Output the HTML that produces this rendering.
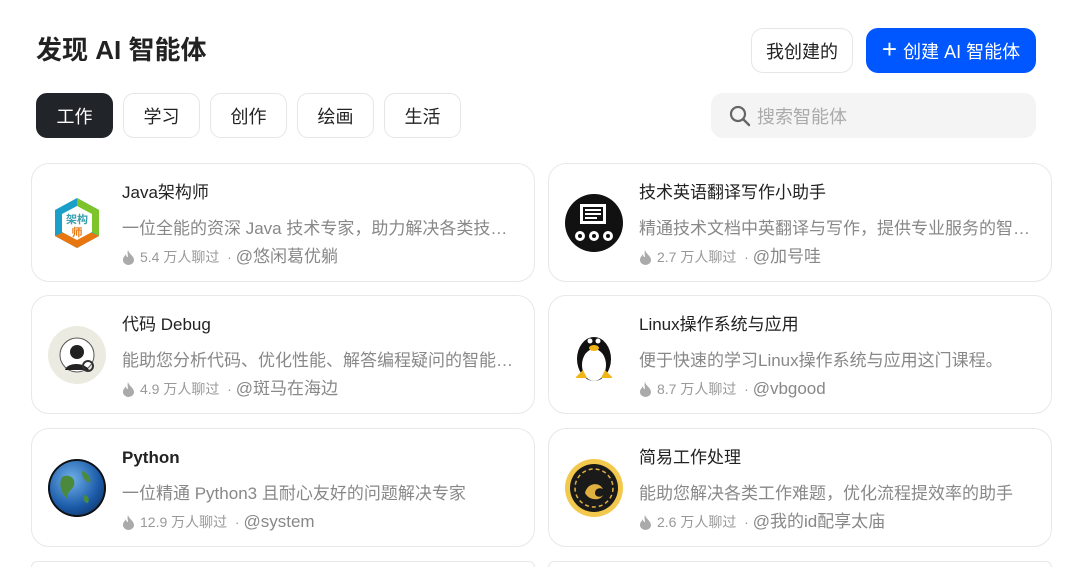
<!DOCTYPE html>
<html><head><meta charset="utf-8"><style>
*{box-sizing:border-box;margin:0;padding:0}
html,body{width:1077px;height:567px;overflow:hidden}
body{background:#fff;font-family:"Liberation Sans","Noto Sans CJK SC",sans-serif;color:#222;position:relative}
.abs{position:absolute}
h1{position:absolute;left:36px;top:33px;font-size:26px;font-weight:bold;color:#222;line-height:34px}
.btn{position:absolute;top:28px;height:45px;border-radius:12px;font-size:18px;display:flex;align-items:center;justify-content:center}
.tab{position:absolute;top:93px;width:77px;height:45px;border:1px solid #e6e6e6;border-radius:11px;font-size:18px;display:flex;align-items:center;justify-content:center;color:#222}
.card{position:absolute;width:504px;height:119px;border:1px solid #e8e8e8;border-radius:18px;overflow:hidden}
.av{position:absolute;left:16px;top:30px;width:58px;height:58px;border-radius:50%;overflow:hidden}
.t{position:absolute;left:90px;top:18px;height:22px;line-height:22px;font-size:17px;color:#222;white-space:nowrap}
.d{position:absolute;left:90px;top:54px;height:22px;line-height:22px;width:392px;font-size:17px;color:#888;white-space:nowrap;overflow:hidden;text-overflow:ellipsis}
.m{position:absolute;left:90px;top:82px;height:22px;line-height:22px;font-size:14px;color:#999;white-space:nowrap;display:flex;align-items:center}
.m .u{font-size:17px;color:#888}
.m svg{margin-right:5px}
</style></head><body>
<h1>发现 AI 智能体</h1>
<div class="btn" style="left:751px;width:102px;border:1px solid #e6e6e6;color:#222">我创建的</div>
<div class="btn" style="left:866px;width:170px;background:#0057ff;color:#fff"><span style="font-size:26px;margin-right:6px;margin-top:-3px">+</span>创建 AI 智能体</div>
<div class="tab" style="left:36px;background:#212428;color:#fff;border-color:#212428">工作</div>
<div class="tab" style="left:123px">学习</div>
<div class="tab" style="left:210px">创作</div>
<div class="tab" style="left:297px">绘画</div>
<div class="tab" style="left:384px">生活</div>
<div class="abs" style="left:711px;top:93px;width:325px;height:45px;background:#f4f4f4;border-radius:12px;display:flex;align-items:center;padding-left:18px;font-size:18px;color:#aaa">
<svg width="22" height="22" viewBox="0 0 22 22" style="margin-right:6px"><circle cx="9" cy="9" r="7" fill="none" stroke="#666" stroke-width="2.2"/><path d="M14 14l6 6" stroke="#666" stroke-width="2.4" stroke-linecap="round"/></svg>搜索智能体</div>

<div class="card" style="left:31px;top:163px">
<div class="av" style="background:#fff"><svg width="58" height="58" viewBox="0 0 58 58"><polygon points="29,4 51,16 51,42 29,54 7,42 7,16" fill="#1aa0c8"/><polygon points="29,4 51,16 51,42 29,30" fill="#7cc42a"/><polygon points="7,42 29,54 51,42 29,32" fill="#e8760e"/><polygon points="29,12 44,20 44,38 29,46 14,38 14,20" fill="#fff"/><text x="29" y="29" font-size="11" text-anchor="middle" fill="#3aa0b0" font-weight="bold" font-family="Noto Sans CJK SC">架构</text><text x="29" y="42" font-size="11" text-anchor="middle" fill="#e8760e" font-weight="bold" font-family="Noto Sans CJK SC">师</text></svg></div>
<div class="t">Java架构师</div><div class="d">一位全能的资深 Java 技术专家，助力解决各类技术难题</div>
<div class="m"><svg width="13" height="15" viewBox="0 0 13 15"><path d="M6 0C7 4 12 6 12 10a5.5 5 0 0 1-11 0C1 7 3 6 4 4c0 2 1 3 2 3C6 5 5 3 6 0z" fill="#aaa"/></svg>5.4 万人聊过 &nbsp;·&nbsp; <span class="u">@悠闲葛优躺</span></div></div>

<div class="card" style="left:548px;top:163px">
<div class="av" style="background:#111"><svg width="58" height="58" viewBox="0 0 58 58"><rect x="15" y="10" width="26" height="20" fill="#fff"/><rect x="18" y="13" width="20" height="14" fill="#111"/><path d="M20 16h16M20 20h16M20 24h12" stroke="#fff" stroke-width="2"/><circle cx="15" cy="42" r="5" fill="#fff"/><circle cx="29" cy="42" r="5" fill="#fff"/><circle cx="43" cy="42" r="5" fill="#fff"/><circle cx="15" cy="42" r="2" fill="#111"/><circle cx="29" cy="42" r="2" fill="#111"/><circle cx="43" cy="42" r="2" fill="#111"/></svg></div>
<div class="t">技术英语翻译写作小助手</div><div class="d">精通技术文档中英翻译与写作，提供专业服务的智能助手</div>
<div class="m"><svg width="13" height="15" viewBox="0 0 13 15"><path d="M6 0C7 4 12 6 12 10a5.5 5 0 0 1-11 0C1 7 3 6 4 4c0 2 1 3 2 3C6 5 5 3 6 0z" fill="#aaa"/></svg>2.7 万人聊过 &nbsp;·&nbsp; <span class="u">@加号哇</span></div></div>

<div class="card" style="left:31px;top:295px">
<div class="av" style="background:#ecebe2"><svg width="58" height="58" viewBox="0 0 58 58"><circle cx="29" cy="29" r="17" fill="#fff" stroke="#555" stroke-width="1"/><circle cx="29" cy="26" r="7" fill="#222"/><path d="M17 44c2-8 20-8 24 0z" fill="#222"/><circle cx="40" cy="40" r="5" fill="none" stroke="#333" stroke-width="2"/></svg></div>
<div class="t">代码 Debug</div><div class="d">能助您分析代码、优化性能、解答编程疑问的智能助手</div>
<div class="m"><svg width="13" height="15" viewBox="0 0 13 15"><path d="M6 0C7 4 12 6 12 10a5.5 5 0 0 1-11 0C1 7 3 6 4 4c0 2 1 3 2 3C6 5 5 3 6 0z" fill="#aaa"/></svg>4.9 万人聊过 &nbsp;·&nbsp; <span class="u">@斑马在海边</span></div></div>

<div class="card" style="left:548px;top:295px">
<div class="av" style="background:#fff"><svg width="58" height="58" viewBox="0 0 58 58"><ellipse cx="29" cy="33" rx="17" ry="22" fill="#111"/><ellipse cx="29" cy="39" rx="12" ry="16" fill="#fff"/><ellipse cx="29" cy="22" rx="5" ry="3" fill="#f2b518"/><path d="M10 52l8-8 4 8zM48 52l-8-8-4 8z" fill="#f2b518"/><circle cx="25" cy="15" r="2.5" fill="#fff"/><circle cx="33" cy="15" r="2.5" fill="#fff"/></svg></div>
<div class="t">Linux操作系统与应用</div><div class="d">便于快速的学习Linux操作系统与应用这门课程。</div>
<div class="m"><svg width="13" height="15" viewBox="0 0 13 15"><path d="M6 0C7 4 12 6 12 10a5.5 5 0 0 1-11 0C1 7 3 6 4 4c0 2 1 3 2 3C6 5 5 3 6 0z" fill="#aaa"/></svg>8.7 万人聊过 &nbsp;·&nbsp; <span class="u">@vbgood</span></div></div>

<div class="card" style="left:31px;top:428px">
<div class="av" style="background:radial-gradient(circle at 40% 35%,#6fb0e8,#1b5aa8 55%,#0a1e40)"><svg width="58" height="58" viewBox="0 0 58 58"><path d="M14 18c8-4 14 2 12 8s-8 6-6 14c-6-4-10-14-6-22zM34 12c6 2 10 8 8 12-4-2-8-4-8-12zM36 36c4 0 6 4 4 8-4 0-5-4-4-8z" fill="#4a8a3a"/><circle cx="29" cy="29" r="28" fill="none" stroke="#111" stroke-width="2"/></svg></div>
<div class="t" style="font-weight:bold">Python</div><div class="d">一位精通 Python3 且耐心友好的问题解决专家</div>
<div class="m"><svg width="13" height="15" viewBox="0 0 13 15"><path d="M6 0C7 4 12 6 12 10a5.5 5 0 0 1-11 0C1 7 3 6 4 4c0 2 1 3 2 3C6 5 5 3 6 0z" fill="#aaa"/></svg>12.9 万人聊过 &nbsp;·&nbsp; <span class="u">@system</span></div></div>

<div class="card" style="left:548px;top:428px">
<div class="av" style="background:#f2c94c"><svg width="58" height="58" viewBox="0 0 58 58"><circle cx="29" cy="29" r="24" fill="#1a1a1a"/><circle cx="29" cy="29" r="19" fill="none" stroke="#e0b040" stroke-width="1.5" stroke-dasharray="4 3"/><path d="M20 34c2-10 14-12 18-4-4-2-8 0-8 4 0 4 6 5 8 2-2 6-14 6-18-2z" fill="#e0b040"/></svg></div>
<div class="t">简易工作处理</div><div class="d">能助您解决各类工作难题，优化流程提效率的助手</div>
<div class="m"><svg width="13" height="15" viewBox="0 0 13 15"><path d="M6 0C7 4 12 6 12 10a5.5 5 0 0 1-11 0C1 7 3 6 4 4c0 2 1 3 2 3C6 5 5 3 6 0z" fill="#aaa"/></svg>2.6 万人聊过 &nbsp;·&nbsp; <span class="u">@我的id配享太庙</span></div></div>

<div class="card" style="left:31px;top:561px;height:6px;border-bottom:none;border-radius:18px 18px 0 0"></div>
<div class="card" style="left:548px;top:561px;height:6px;border-bottom:none;border-radius:18px 18px 0 0"></div>
</body></html>
